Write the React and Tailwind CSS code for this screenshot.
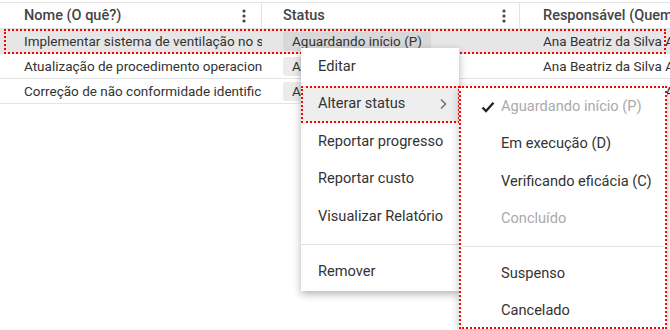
import React from 'react'

const rows = [
    { name: 'Implementar sistema de ventilação no setor de pintura', status: 'Aguardando início (P)', who: 'Ana Beatriz da Silva Almeida', selected: true },
    { name: 'Atualização de procedimento operacional padrão', status: 'Aguardando início (P)', who: 'Ana Beatriz da Silva Almeida' },
    { name: 'Correção de não conformidade identificada', status: 'Aguardando início (P)', who: 'Ana Beatriz da Silva Almeida' },
]

const Kebab = () => (
    <svg width="4" height="14" viewBox="0 0 4 14" className="shrink-0">
        <circle cx="2" cy="2" r="1.6" fill="#444" />
        <circle cx="2" cy="7" r="1.6" fill="#444" />
        <circle cx="2" cy="12" r="1.6" fill="#444" />
    </svg>
)

const Check = () => (
    <svg width="14" height="12" viewBox="0 0 14 12">
        <path d="M1.5 6.5 L5 10 L12.5 1.8" fill="none" stroke="#222" strokeWidth="2.3" />
    </svg>
)

const Chevron = () => (
    <svg width="8" height="12" viewBox="0 0 8 12">
        <path d="M2 1.5 L6.5 6 L2 10.5" fill="none" stroke="#777" strokeWidth="1.6" />
    </svg>
)

const menuItems = ['Editar', 'Alterar status', 'Reportar progresso', 'Reportar custo', 'Visualizar Relatório']

const subItems = [
    { label: 'Aguardando início (P)', checked: true, disabled: true },
    { label: 'Em execução (D)' },
    { label: 'Verificando eficácia (C)' },
    { label: 'Concluído', disabled: true },
]

export default function App() {
    return (
        <div className="relative w-[670px] h-[330px] overflow-hidden bg-white text-[#333]" style={{ fontFamily: 'Roboto, "Liberation Sans", sans-serif' }}>
            <div className="h-[2px]" />
            {/* header */}
            <div className="flex h-[27px] border-t border-b border-[#e4e4e4] text-[14.5px] font-medium text-[#444]">
                <div className="w-[262px] shrink-0 flex items-center pl-6 pr-[15px] border-r border-[#e4e4e4]">
                    <span className="flex-1">Nome (O quê?)</span>
                    <Kebab />
                </div>
                <div className="w-[258px] shrink-0 flex items-center pl-[21px] pr-[13px] border-r border-[#e4e4e4]">
                    <span className="flex-1">Status</span>
                    <Kebab />
                </div>
                <div className="flex-1 flex items-center pl-[23px] whitespace-nowrap overflow-hidden">
                    Responsável (Quem?)
                </div>
            </div>

            {/* rows */}
            {rows.map((r, i) => (
                <div key={i} className={`relative flex h-[25px] border-b border-[#e4e4e4] text-[13.5px] ${r.selected ? 'bg-[#e6e6e6]' : 'bg-white'}`}>
                    <div className="w-[262px] shrink-0 flex items-center pl-6 whitespace-nowrap overflow-hidden">{r.name}</div>
                    <div className="w-[258px] shrink-0 flex items-center pl-[21px]">
                        <span className={`h-[19px] flex items-center px-[9px] rounded-[3px] whitespace-nowrap ${r.selected ? 'bg-[#d8d8d8]' : 'bg-[#ebebeb]'}`}>{r.status}</span>
                    </div>
                    <div className="flex-1 flex items-center pl-[23px] whitespace-nowrap overflow-hidden">{r.who}</div>
                    {r.selected && <div className="absolute left-1 right-1 top-0 -bottom-px border-2 border-dotted border-[#f00]" />}
                </div>
            ))}

            {/* context menu */}
            <div className="absolute left-[301px] top-[48px] w-[158px] bg-white shadow-[0_3px_8px_rgba(0,0,0,0.3)] text-[14.6px] text-[#333]">
                {menuItems.map((m, i) => (
                    <div key={m} className={`relative h-[37.5px] flex items-center pl-[17px] pr-[12px] whitespace-nowrap ${i === 1 ? 'bg-[#eeeeee]' : ''}`}>
                        <span className="flex-1">{m}</span>
                        {i === 1 && <Chevron />}
                        {i === 1 && <div className="absolute inset-0 -right-px border-2 border-dotted border-[#f00]" />}
                    </div>
                ))}
                <div className="h-[18px] flex items-center">
                    <div className="w-full h-px bg-[#e2e2e2]" />
                </div>
                <div className="h-[37.5px] flex items-center pl-[17px]">Remover</div>
            </div>

            {/* submenu */}
            <div className="absolute left-[459px] top-[86px] w-[208px] h-[243px] bg-white shadow-[0_3px_8px_rgba(0,0,0,0.25)] border-2 border-dotted border-[#f00] text-[14.6px] text-[#333]">
                {subItems.map((s) => (
                    <div key={s.label} className={`h-[37.5px] flex items-center whitespace-nowrap ${s.disabled ? 'text-[#aaa]' : ''}`}>
                        <span className="w-[40px] flex justify-end pr-[6px]">{s.checked && <Check />}</span>
                        {s.label}
                    </div>
                ))}
                <div className="h-[17px] flex items-center">
                    <div className="w-full h-px bg-[#e2e2e2]" />
                </div>
                <div className="h-[37.5px] flex items-center pl-[40px]">Suspenso</div>
                <div className="h-[37.5px] flex items-center pl-[40px]">Cancelado</div>
            </div>
        </div>
    )
}
